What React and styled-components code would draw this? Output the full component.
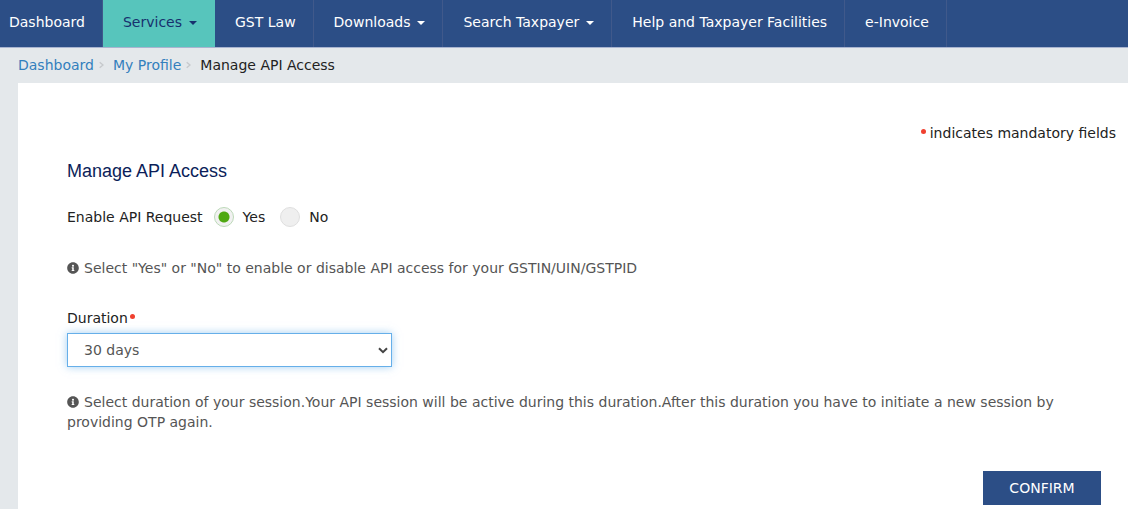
import React, { useState } from "react";
import styled, { createGlobalStyle } from "styled-components";
import { FaInfoCircle } from "react-icons/fa";

const GlobalStyle = createGlobalStyle`
  *, *::before, *::after { box-sizing: border-box; }
  body {
    margin: 0;
    background: #e4e8eb;
    color: #222;
    font-family: Verdana, "DejaVu Sans", sans-serif;
    font-size: 14px;
    line-height: 20px;
  }
`;

const Page = styled.div`
  display: flex;
  flex-direction: column;
  min-height: 100vh;
`;

const NavBar = styled.nav`
  display: flex;
  height: 48px;
  background: #2c4e86;
  border-bottom: 1px solid #a9b4d0;
  overflow: hidden;
`;

const NavLink = styled.a`
  display: flex;
  align-items: center;
  gap: 7px;
  padding: 0 17px 4px 20px;
  border-right: 1px solid ${(p) => (p.$active ? "#57c5bc" : "#40598b")};
  background: ${(p) => (p.$active ? "#57c5bc" : "transparent")};
  color: ${(p) => (p.$active ? "#17316e" : "#fff")};
  text-decoration: none;
  white-space: nowrap;

  &:first-child { padding-left: 9px; }
`;

const Caret = styled.span`
  margin-top: 2px;
  border-top: 4px solid currentColor;
  border-left: 4px solid transparent;
  border-right: 4px solid transparent;
`;

const Breadcrumb = styled.nav`
  display: flex;
  align-items: center;
  padding: 7px 18px 8px;
`;

const Crumb = styled.a`
  color: #337fbd;
  text-decoration: none;
`;

const Separator = styled.svg`
  width: 5px;
  height: 8px;
  margin: 0 9px 0 5px;
  fill: none;
  stroke: #c6c9cc;
  stroke-width: 1.4;
`;

const Panel = styled.main`
  flex: 1;
  display: flex;
  flex-direction: column;
  align-items: flex-start;
  margin-left: 18px;
  padding: 40px 12px 4px 49px;
  background: #fff;
`;

const Mandatory = styled.p`
  align-self: flex-end;
  display: flex;
  align-items: center;
  gap: 4px;
  margin: 0;
`;

const Dot = styled.span`
  width: 5px;
  height: 5px;
  margin-bottom: 4px;
  border-radius: 50%;
  background: #f0402f;
`;

const Title = styled.h1`
  margin: 18px 0 0;
  color: #0b1e59;
  font: 400 18px/20px "Liberation Sans", Arial, sans-serif;
`;

const RadioGroup = styled.fieldset`
  display: flex;
  align-items: center;
  margin: 26px 0 0;
  padding: 0;
  border: 0;
`;

const Legend = styled.legend`
  float: left;
  margin-right: 11px;
  padding: 0;
`;

const RadioLabel = styled.label`
  display: flex;
  align-items: center;
  gap: 9px;
  margin-right: 15px;
`;

const Radio = styled.input`
  appearance: none;
  width: 20px;
  height: 20px;
  margin: 0;
  border: 1px solid #dfdfdf;
  border-radius: 50%;
  background: #efefef;

  &:checked {
    border-color: #bcd9b8;
    background: radial-gradient(circle, #4fa812 5px, #f1f1f1 6px);
  }
`;

const Hint = styled.p`
  margin: ${(p) => p.$top}px 0 0;
  color: #555;

  svg {
    width: 12px;
    height: 12px;
    margin-right: 5px;
    vertical-align: -1px;
  }
`;

const FieldLabel = styled.label`
  display: flex;
  align-items: center;
  gap: 2px;
  margin: 30px 0 5px;
`;

const SelectBox = styled.div`
  display: grid;
  align-items: center;
  width: 31%;
  min-width: 200px;

  > * { grid-area: 1 / 1; }

  svg {
    justify-self: end;
    width: 10px;
    height: 7px;
    margin-right: 4px;
    fill: none;
    stroke: #444;
    stroke-width: 2;
    pointer-events: none;
  }
`;

const Select = styled.select`
  appearance: none;
  width: 100%;
  height: 34px;
  padding: 0 16px;
  border: 1px solid #66afe9;
  border-radius: 0;
  outline: 0;
  background: #fff;
  box-shadow: 0 0 8px rgba(102, 175, 233, 0.6);
  color: #555;
  font: inherit;
`;

const Confirm = styled.button`
  align-self: flex-end;
  min-width: 118px;
  height: 34px;
  margin: 39px 15px 0 0;
  padding: 0 24px;
  border: 1px solid #2c4e86;
  background: #2c4e86;
  color: #fff;
  font: inherit;
`;

const navItems = [
  { label: "Dashboard" },
  { label: "Services", menu: true, active: true },
  { label: "GST Law" },
  { label: "Downloads", menu: true },
  { label: "Search Taxpayer", menu: true },
  { label: "Help and Taxpayer Facilities" },
  { label: "e-Invoice" },
];

const Chevron = () => (
  <Separator viewBox="0 0 5 8" aria-hidden="true">
    <path d="M.7 1.2 4 4 .7 6.8" />
  </Separator>
);

export default function App() {
  const [enabled, setEnabled] = useState("Yes");
  return (
    <Page>
      <GlobalStyle />
      <NavBar>
        {navItems.map(({ label, menu, active }) => (
          <NavLink key={label} href="#" $active={active}>
            {label}
            {menu && <Caret />}
          </NavLink>
        ))}
      </NavBar>
      <Breadcrumb aria-label="Breadcrumb">
        <Crumb href="#">Dashboard</Crumb>
        <Chevron />
        <Crumb href="#">My Profile</Crumb>
        <Chevron />
        <span>Manage API Access</span>
      </Breadcrumb>
      <Panel>
        <Mandatory>
          <Dot />
          indicates mandatory fields
        </Mandatory>
        <Title>Manage API Access</Title>
        <RadioGroup>
          <Legend>Enable API Request</Legend>
          {["Yes", "No"].map((value) => (
            <RadioLabel key={value}>
              <Radio
                type="radio"
                name="enable"
                value={value}
                checked={enabled === value}
                onChange={() => setEnabled(value)}
              />
              {value}
            </RadioLabel>
          ))}
        </RadioGroup>
        <Hint $top={31}>
          <FaInfoCircle />
          Select "Yes" or "No" to enable or disable API access for your GSTIN/UIN/GSTPID
        </Hint>
        <FieldLabel htmlFor="duration">
          Duration
          <Dot />
        </FieldLabel>
        <SelectBox>
          <Select id="duration" defaultValue="30 days">
            <option>6 hours</option>
            <option>30 days</option>
          </Select>
          <svg viewBox="0 0 10 7" aria-hidden="true">
            <path d="M1 1.2 5 5.2 9 1.2" />
          </svg>
        </SelectBox>
        <Hint $top={25}>
          <FaInfoCircle />
          Select duration of your session.Your API session will be active during this duration.After this
          duration you have to initiate a new session by providing OTP again.
        </Hint>
        <Confirm type="button">CONFIRM</Confirm>
      </Panel>
    </Page>
  );
}
